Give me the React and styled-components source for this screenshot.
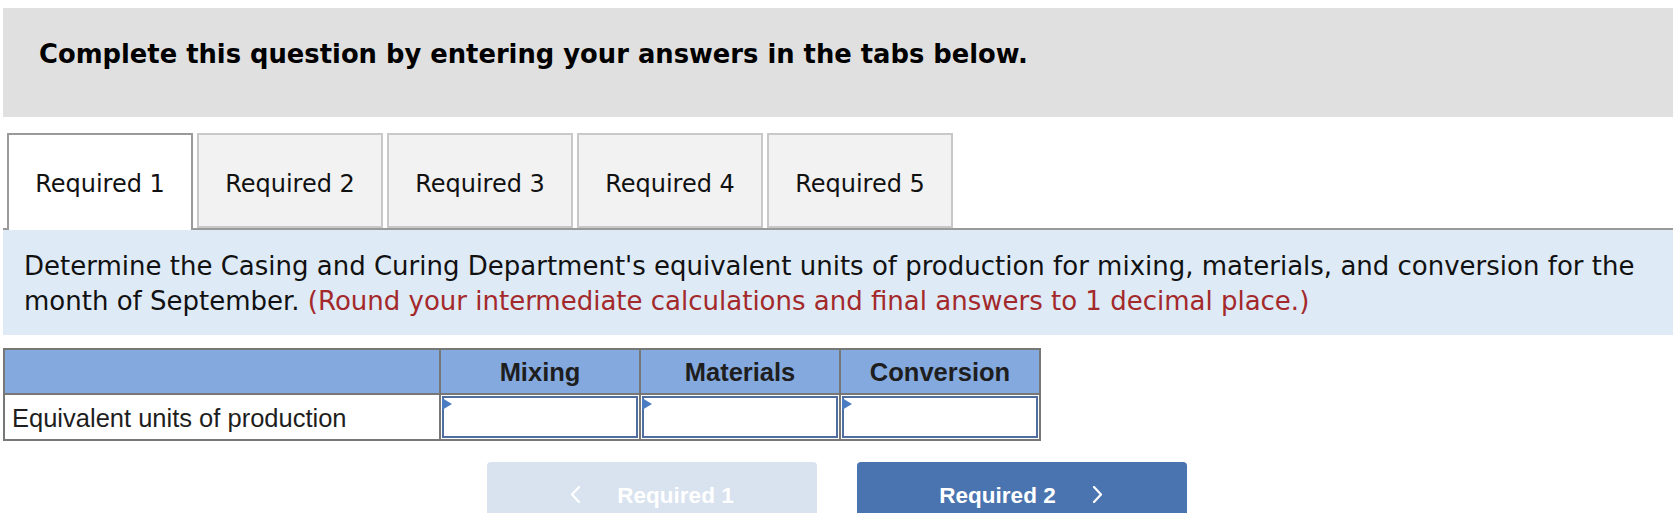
import React from "react";
import styled, { createGlobalStyle } from "styled-components";

const Global = createGlobalStyle`
  html, body { margin: 0; padding: 0; background: #ffffff; }
  body { width: 1673px; height: 522px; overflow: hidden; }
  * { box-sizing: border-box; }
`;

const Page = styled.div`
  padding: 8px 0 0 3px;
  display: flex;
  flex-direction: column;
`;

const Banner = styled.div`
  height: 109px;
  background: #e0e0e0;
  padding: 31px 0 0 36px;
  font-family: "DejaVu Sans", Verdana, sans-serif;
  font-weight: bold;
  font-size: 25.8px;
  line-height: 30px;
  color: #000;
`;

const TabBar = styled.div`
  margin-top: 16px;
  display: flex;
  gap: 4px;
  padding-left: 4px;
  border-bottom: 2px solid #9a9a9a;
`;

const Tab = styled.div`
  width: 186px;
  height: ${(p) => (p.$active ? "97px" : "95px")};
  margin-bottom: ${(p) => (p.$active ? "-2px" : "0")};
  display: flex;
  align-items: center;
  justify-content: center;
  padding-top: ${(p) => (p.$active ? "2px" : "6px")};
  background: ${(p) => (p.$active ? "#ffffff" : "#f2f2f2")};
  border: 2px solid ${(p) => (p.$active ? "#9a9a9a" : "#c8c8c8")};
  border-bottom: ${(p) => (p.$active ? "none" : "2px solid #c8c8c8")};
  font-family: "DejaVu Sans", Verdana, sans-serif;
  font-size: 24px;
  color: #111;
`;

const Instructions = styled.div`
  background: #deeaf6;
  padding: 19px 20px 16px 21px;
  font-family: "DejaVu Sans", Verdana, sans-serif;
  font-size: 26px;
  line-height: 35px;
  color: #111;
`;

const Note = styled.span`
  color: #a3292b;
`;

const Grid = styled.div`
  margin-top: 13px;
  width: 1038px;
  display: grid;
  grid-template-columns: 434px 198px 198px 198px;
  grid-template-rows: 43px 44px;
  gap: 2px;
  padding: 2px;
  background: #777777;
`;

const HeadCell = styled.div`
  background: #83a9de;
  display: flex;
  align-items: center;
  justify-content: center;
  padding-top: 2px;
  font-family: "Liberation Sans", Arial, sans-serif;
  font-weight: bold;
  font-size: 25.5px;
  color: #1e1e1e;
`;

const LabelCell = styled.div`
  background: #ffffff;
  display: flex;
  align-items: center;
  padding: 2px 0 0 7px;
  font-family: "Liberation Sans", Arial, sans-serif;
  font-size: 25.5px;
  color: #1e1e1e;
`;

const InputCell = styled.div`
  background: #ffffff;
  padding: 1px;
  display: flex;
`;

const Field = styled.div`
  position: relative;
  flex: 1;
  border: 2px solid #4f6fa0;
  background: #ffffff;
`;

const Flag = styled.span`
  position: absolute;
  top: 0;
  left: -2px;
  width: 0;
  height: 0;
  border-top: 6px solid transparent;
  border-bottom: 6px solid transparent;
  border-left: 10px solid #4a7cc4;
`;

const Nav = styled.div`
  margin-top: 21px;
  display: flex;
  justify-content: center;
  gap: 40px;
  margin-left: -3px;
`;

const NavButton = styled.div`
  width: 330px;
  height: 51px;
  border-radius: 4px 4px 0 0;
  background: ${(p) => (p.$disabled ? "#d9e3ef" : "#4a74b0")};
  display: flex;
  align-items: flex-start;
  justify-content: center;
  gap: 35px;
  padding-top: 23px;
  font-family: "Liberation Sans", Arial, sans-serif;
  font-weight: bold;
  font-size: 22.5px;
  line-height: 22px;
  color: #ffffff;
`;

const Chevron = styled.svg`
  width: 13px;
  height: 17px;
  margin-top: 1px;
  flex: none;
`;

const Left = () => (
  <Chevron viewBox="0 0 13 17">
    <polyline points="10,1 3,8.5 10,16" fill="none" stroke="#ffffff" strokeWidth="2.2" strokeLinecap="round" strokeLinejoin="round" />
  </Chevron>
);

const Right = () => (
  <Chevron viewBox="0 0 13 17">
    <polyline points="3,1 10,8.5 3,16" fill="none" stroke="#ffffff" strokeWidth="2.2" strokeLinecap="round" strokeLinejoin="round" />
  </Chevron>
);

const tabs = ["Required 1", "Required 2", "Required 3", "Required 4", "Required 5"];
const cols = ["Mixing", "Materials", "Conversion"];

export default function App() {
  return (
    <>
      <Global />
      <Page>
        <Banner>Complete this question by entering your answers in the tabs below.</Banner>
        <TabBar>
          {tabs.map((t, i) => (
            <Tab key={t} $active={i === 0}>{t}</Tab>
          ))}
        </TabBar>
        <Instructions>
          Determine the Casing and Curing Department's equivalent units of production for mixing, materials, and conversion for the month of September.{" "}
          <Note>(Round your intermediate calculations and final answers to 1 decimal place.)</Note>
        </Instructions>
        <Grid>
          <HeadCell />
          {cols.map((c) => (
            <HeadCell key={c}>{c}</HeadCell>
          ))}
          <LabelCell>Equivalent units of production</LabelCell>
          {cols.map((c) => (
            <InputCell key={c}>
              <Field>
                <Flag />
              </Field>
            </InputCell>
          ))}
        </Grid>
        <Nav>
          <NavButton $disabled>
            <Left />
            <span>Required 1</span>
          </NavButton>
          <NavButton>
            <span>Required 2</span>
            <Right />
          </NavButton>
        </Nav>
      </Page>
    </>
  );
}
